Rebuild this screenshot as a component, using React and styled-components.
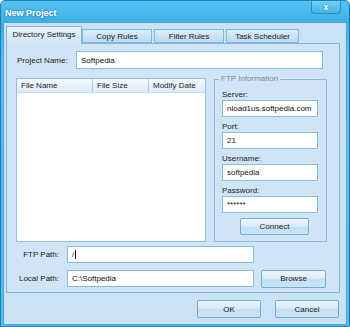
import React from 'react'
import styled, { createGlobalStyle } from 'styled-components'

const Global = createGlobalStyle`
  html, body {
    margin: 0;
    padding: 0;
    background: #ffffff;
  }
  * {
    box-sizing: border-box;
  }
`

const tabs = ['Directory Settings', 'Copy Rules', 'Filter Rules', 'Task Scheduler']
const tabWidths = [76, 70, 70, 73]

const ftpFields = [
  { label: 'Server:', value: 'nload1us.softpedia.com' },
  { label: 'Port:', value: '21' },
  { label: 'Username:', value: 'softpedia' },
  { label: 'Password:', value: '******' }
]

export default function App () {
  return (
    <>
      <Global />
      <Window>
        <TitleBar>
          <Title>New Project</Title>
          <CloseButton>x</CloseButton>
        </TitleBar>
        <Body>
          <TabStrip>
            {tabs.map((t, i) => (
              <Tab key={t} $active={i === 0} $w={tabWidths[i]}>{t}</Tab>
            ))}
          </TabStrip>
          <Panel>
            <NameRow>
              <Label>Project Name:</Label>
              <TextBox $grow>Softpedia</TextBox>
            </NameRow>
            <Main>
              <ListView>
                <ListHeader>
                  <Column $w={76}>File Name</Column>
                  <Column $w={56}>File Size</Column>
                  <Column>Modify Date</Column>
                </ListHeader>
              </ListView>
              <Group>
                <Legend>FTP Information</Legend>
                {ftpFields.map((f, i) => (
                  <React.Fragment key={f.label}>
                    <FieldLabel $first={i === 0}>{f.label}</FieldLabel>
                    <TextBox $h={17}>{f.value}</TextBox>
                  </React.Fragment>
                ))}
                <Button $w={69} $h={17} $ml={18} $mt={5}>Connect</Button>
              </Group>
            </Main>
            <PathRow $mt={4}>
              <PathLabel>FTP Path:</PathLabel>
              <TextBox $w={187} $h={17}>/<Caret /></TextBox>
            </PathRow>
            <PathRow $mt={7}>
              <PathLabel>Local Path:</PathLabel>
              <TextBox $w={187} $h={17}>C:\Softpedia</TextBox>
              <Button $w={65} $h={18} $ml={7}>Browse</Button>
            </PathRow>
          </Panel>
          <Footer>
            <Button $w={64} $h={18}>OK</Button>
            <Button $w={64} $h={18}>Cancel</Button>
          </Footer>
        </Body>
      </Window>
    </>
  )
}

const Window = styled.div`
  width: 350px;
  height: 327px;
  display: flex;
  flex-direction: column;
  border: 1px solid #1b7fbb;
  border-radius: 5px 5px 0 0;
  background: linear-gradient(#55c3f1, #3cb0e5 22px, #5cc0ec 60px, #52bbea);
  font-family: "Liberation Sans", Arial, sans-serif;
  font-size: 8px;
  color: #1a1a1a;
  overflow: hidden;
`

const TitleBar = styled.div`
  height: 21px;
  display: flex;
  align-items: center;
  padding-left: 4px;
`

const Title = styled.div`
  color: #ffffff;
  font-weight: bold;
  font-size: 9px;
  text-shadow: 0 0 3px rgba(0, 60, 110, 0.55);
  margin-top: 2px;
`

const CloseButton = styled.div`
  margin-left: auto;
  margin-right: 8px;
  align-self: flex-start;
  width: 30px;
  height: 14px;
  margin-top: -1px;
  border: 1px solid #2a8cc6;
  border-top: none;
  border-radius: 0 0 4px 4px;
  background: linear-gradient(#7ad3f5, #42b4e8);
  color: #ffffff;
  font-weight: bold;
  font-size: 9px;
  display: flex;
  align-items: center;
  justify-content: center;
  text-shadow: 0 0 2px rgba(0, 60, 110, 0.7);
`

const Body = styled.div`
  flex: 1;
  margin: 0 2px 1px 2px;
  border: 1px solid #4aa6d8;
  background: #cde1f4;
  display: flex;
  flex-direction: column;
`

const TabStrip = styled.div`
  height: 20px;
  display: flex;
  align-items: flex-end;
  padding-left: 2px;
  gap: 2px;
`

const Tab = styled.div`
  width: ${p => p.$w}px;
  height: ${p => (p.$active ? 18 : 14)}px;
  margin-bottom: ${p => (p.$active ? -1 : 0)}px;
  margin-right: ${p => (p.$active ? -2 : 0)}px;
  position: relative;
  z-index: ${p => (p.$active ? 2 : 1)};
  border: 1px solid #7db8e2;
  border-bottom: ${p => (p.$active ? 'none' : '1px solid #7db8e2')};
  background: ${p => (p.$active
    ? 'linear-gradient(#e6f2fb, #d3e6f6)'
    : 'linear-gradient(#dcecf9, #bcd9f1)')};
  display: flex;
  align-items: center;
  justify-content: center;
  padding-bottom: ${p => (p.$active ? 2 : 0)}px;
  white-space: nowrap;
`

const Panel = styled.div`
  height: 250px;
  margin: 0 6px 0 2px;
  border: 1px solid #7db8e2;
  background: #d0e4f5;
  padding: 7px 12px 5px 9px;
  display: flex;
  flex-direction: column;
  position: relative;
  z-index: 1;
`

const NameRow = styled.div`
  display: flex;
  align-items: center;
  height: 18px;
  margin-right: 4px;
`

const Label = styled.div`
  width: 60px;
  padding-left: 1px;
  white-space: nowrap;
`

const TextBox = styled.div`
  ${p => (p.$grow ? 'flex: 1;' : '')}
  ${p => (p.$w ? `width: ${p.$w}px;` : '')}
  height: ${p => p.$h || 18}px;
  flex-shrink: 0;
  background: #ffffff;
  border: 1px solid #86bde3;
  padding-left: 4px;
  display: flex;
  align-items: center;
  white-space: nowrap;
  overflow: hidden;
  color: #111;
`

const Caret = styled.span`
  display: inline-block;
  width: 1px;
  height: 9px;
  background: #111;
  margin-left: 1px;
`

const Main = styled.div`
  display: flex;
  height: 164px;
  margin-top: 9px;
`

const ListView = styled.div`
  width: 190px;
  background: #ffffff;
  border: 1px solid #8fc0e4;
`

const ListHeader = styled.div`
  height: 14px;
  display: flex;
  background: linear-gradient(#f3f9fe, #dcebf8);
  border-bottom: 1px solid #c4dcef;
`

const Column = styled.div`
  ${p => (p.$w ? `width: ${p.$w}px;` : 'flex: 1;')}
  padding-left: 4px;
  display: flex;
  align-items: center;
  white-space: nowrap;
  overflow: hidden;
  border-right: ${p => (p.$w ? '1px solid #a9cbe6' : 'none')};
`

const Group = styled.div`
  position: relative;
  width: 113px;
  margin-left: 8px;
  margin-top: 1px;
  border: 1px solid #86bde3;
  padding: 9px 8px 6px 7px;
  display: flex;
  flex-direction: column;
`

const Legend = styled.div`
  position: absolute;
  top: -6px;
  left: 4px;
  padding: 0 2px;
  background: #d0e4f5;
  color: #7d8c99;
  line-height: 10px;
`

const FieldLabel = styled.div`
  height: 11px;
  line-height: 11px;
  margin-top: ${p => (p.$first ? 0 : 4)}px;
`

const PathRow = styled.div`
  display: flex;
  align-items: center;
  margin-top: ${p => p.$mt}px;
  height: 17px;
`

const PathLabel = styled.div`
  width: 43px;
  text-align: right;
  margin-right: 8px;
  white-space: nowrap;
`

const Button = styled.div`
  width: ${p => p.$w}px;
  height: ${p => p.$h}px;
  flex-shrink: 0;
  margin-left: ${p => p.$ml || 0}px;
  margin-top: ${p => p.$mt || 0}px;
  border: 1px solid #6aaedd;
  border-radius: 2px;
  background: linear-gradient(#eef6fd, #d6e9f8 50%, #c3ddf2 51%, #cfe4f6);
  display: flex;
  align-items: center;
  justify-content: center;
  color: #1a1a1a;
`

const Footer = styled.div`
  display: flex;
  justify-content: flex-end;
  gap: 14px;
  padding: 7px 7px 0 0;
`
